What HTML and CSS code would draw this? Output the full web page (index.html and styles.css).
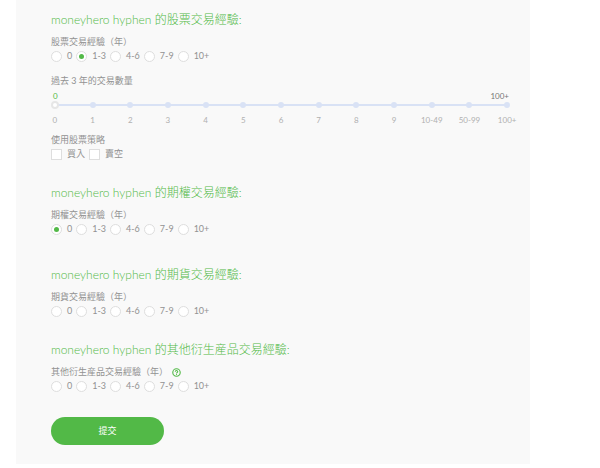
FILE: index.html
```html
<!DOCTYPE html>
<html lang="zh-Hant">
<head>
    <meta charset="UTF-8">
    <meta name="viewport" content="width=device-width, initial-scale=1.0">
    <title>交易經驗</title>
    <link rel="stylesheet" href="styles.css">
</head>
<body>
    <form class="panel">
        <section class="section">
            <h2>moneyhero hyphen 的股票交易經驗:</h2>
            <fieldset>
                <legend>股票交易經驗（年）</legend>
                <div class="options">
                    <label><input type="radio" name="stock" value="0">0</label>
                    <label><input type="radio" name="stock" value="1-3" checked>1-3</label>
                    <label><input type="radio" name="stock" value="4-6">4-6</label>
                    <label><input type="radio" name="stock" value="7-9">7-9</label>
                    <label><input type="radio" name="stock" value="10+">10+</label>
                </div>
            </fieldset>
            <div class="trades">
                <label class="caption" for="trades">過去 3 年的交易數量</label>
                <div class="slider">
                    <div class="slider-values">
                        <output for="trades">0</output>
                        <span>100+</span>
                    </div>
                    <input type="range" id="trades" min="0" max="12" value="0">
                    <ol class="ticks">
                        <li>0</li>
                        <li>1</li>
                        <li>2</li>
                        <li>3</li>
                        <li>4</li>
                        <li>5</li>
                        <li>6</li>
                        <li>7</li>
                        <li>8</li>
                        <li>9</li>
                        <li>10-49</li>
                        <li>50-99</li>
                        <li>100+</li>
                    </ol>
                </div>
            </div>
            <fieldset>
                <legend>使用股票策略</legend>
                <div class="options">
                    <label><input type="checkbox" name="strategy" value="buy">買入</label>
                    <label><input type="checkbox" name="strategy" value="short">賣空</label>
                </div>
            </fieldset>
        </section>

        <section class="section">
            <h2>moneyhero hyphen 的期權交易經驗:</h2>
            <fieldset>
                <legend>期權交易經驗（年）</legend>
                <div class="options">
                    <label><input type="radio" name="option" value="0" checked>0</label>
                    <label><input type="radio" name="option" value="1-3">1-3</label>
                    <label><input type="radio" name="option" value="4-6">4-6</label>
                    <label><input type="radio" name="option" value="7-9">7-9</label>
                    <label><input type="radio" name="option" value="10+">10+</label>
                </div>
            </fieldset>
        </section>

        <section class="section section-spaced">
            <h2>moneyhero hyphen 的期貨交易經驗:</h2>
            <fieldset>
                <legend>期貨交易經驗（年）</legend>
                <div class="options">
                    <label><input type="radio" name="futures" value="0">0</label>
                    <label><input type="radio" name="futures" value="1-3">1-3</label>
                    <label><input type="radio" name="futures" value="4-6">4-6</label>
                    <label><input type="radio" name="futures" value="7-9">7-9</label>
                    <label><input type="radio" name="futures" value="10+">10+</label>
                </div>
            </fieldset>
        </section>

        <section class="section">
            <h2>moneyhero hyphen 的其他衍生産品交易經驗:</h2>
            <fieldset>
                <legend>其他衍生産品交易經驗（年）
                    <svg class="help" viewBox="0 0 16 16" role="img" aria-label="說明">
                        <circle cx="8" cy="8" r="6.6" fill="none" stroke="currentColor" stroke-width="2"/>
                        <path d="M5.8 6.6C5.8 3.8 10.2 3.9 10.2 6.4C10.2 8 8 7.9 8 9.6" fill="none" stroke="currentColor" stroke-width="1.8"/>
                        <circle cx="8" cy="11.6" r="1" fill="currentColor"/>
                    </svg>
                </legend>
                <div class="options">
                    <label><input type="radio" name="other" value="0">0</label>
                    <label><input type="radio" name="other" value="1-3">1-3</label>
                    <label><input type="radio" name="other" value="4-6">4-6</label>
                    <label><input type="radio" name="other" value="7-9">7-9</label>
                    <label><input type="radio" name="other" value="10+">10+</label>
                </div>
            </fieldset>
        </section>

        <button type="submit" class="submit">提交</button>
    </form>

    <script>
        const slider = document.getElementById("trades");
        const labels = document.querySelectorAll(".ticks li");
        slider.addEventListener("input", () => {
            document.querySelector("output").textContent = labels[slider.value].textContent;
        });
    </script>
</body>
</html>
```
FILE: styles.css
```css
* {
    box-sizing: border-box;
}
body {
    margin: 0;
    background: #ffffff;
    color: #929292;
    font-family: Lato, "Noto Sans CJK TC", sans-serif;
    font-size: 9px;
    line-height: 14px;
}
.panel {
    margin: 0 70px 0 16px;
    padding: 10px 4px 19px 35px;
    background: #f9f9f9;
}
.section {
    margin-bottom: 22px;
}
.section-spaced {
    margin-top: 29px;
}
h2 {
    margin: 0 0 5px;
    color: #52b947; /* thin strokes read as light green */
    font-size: 12px;
    font-weight: 300;
    line-height: 20px;
}
fieldset {
    margin: 0;
    padding: 0;
    border: 0;
}
legend {
    display: flex;
    align-items: center;
    padding: 0;
}
.help {
    width: 9px;
    height: 9px;
    margin-left: 4px;
    color: #52b947;
}

/* Radios and checkboxes */
.options {
    display: flex;
    gap: 4px;
}
.options label {
    display: flex;
    align-items: center;
    gap: 5px;
}
.options input {
    appearance: none;
    display: grid;
    place-items: center;
    width: 11px;
    height: 11px;
    margin: 0;
    border: 1px solid #dedede;
    background: #ffffff;
}
.options input[type="radio"] {
    border-radius: 50%;
}
.options input[type="radio"]:checked::before {
    content: "";
    width: 5px;
    height: 5px;
    border-radius: 50%;
    background: #52b947;
}
.options input[type="checkbox"]:checked {
    background: #52b947;
}

/* Slider */
.trades {
    margin: 11px 0 6px;
}
.caption {
    display: block;
}
.slider {
    display: grid;
    margin-left: -15px;
    padding-top: 4px;
    font-size: 8px;
}
.slider-values {
    display: flex;
    justify-content: space-between;
    padding: 0 17px;
    line-height: 9px;
    color: #777777;
}
.slider-values output {
    color: #52b947;
}
.slider input {
    grid-area: 2 / 1;
    z-index: 1;
    appearance: none;
    width: auto;
    height: 8px;
    margin: 0 15px;
    background: linear-gradient(#d9e2f5, #d9e2f5) center / calc(100% - 6px) 2px no-repeat;
    align-self: start;
}
.slider input::-webkit-slider-thumb {
    appearance: none;
    width: 8px;
    height: 8px;
    border: 2px solid #e6e6e6;
    border-radius: 50%;
    background: #ffffff;
}
.ticks {
    grid-area: 2 / 1;
    display: grid;
    grid-template-columns: repeat(13, 1fr);
    margin: 0;
    padding: 0;
    list-style: none;
    text-align: center;
    color: #b0b0b0;
}
.ticks li::before {
    content: "";
    display: block;
    width: 6px;
    height: 6px;
    margin: 1px auto 5px;
    border-radius: 50%;
    background: #d9e2f5;
}

.submit {
    display: block;
    width: 113px;
    height: 28px;
    margin-top: 24px;
    border: 0;
    border-radius: 14px;
    background: #52b947;
    color: #ffffff;
    font: inherit;
}
```
